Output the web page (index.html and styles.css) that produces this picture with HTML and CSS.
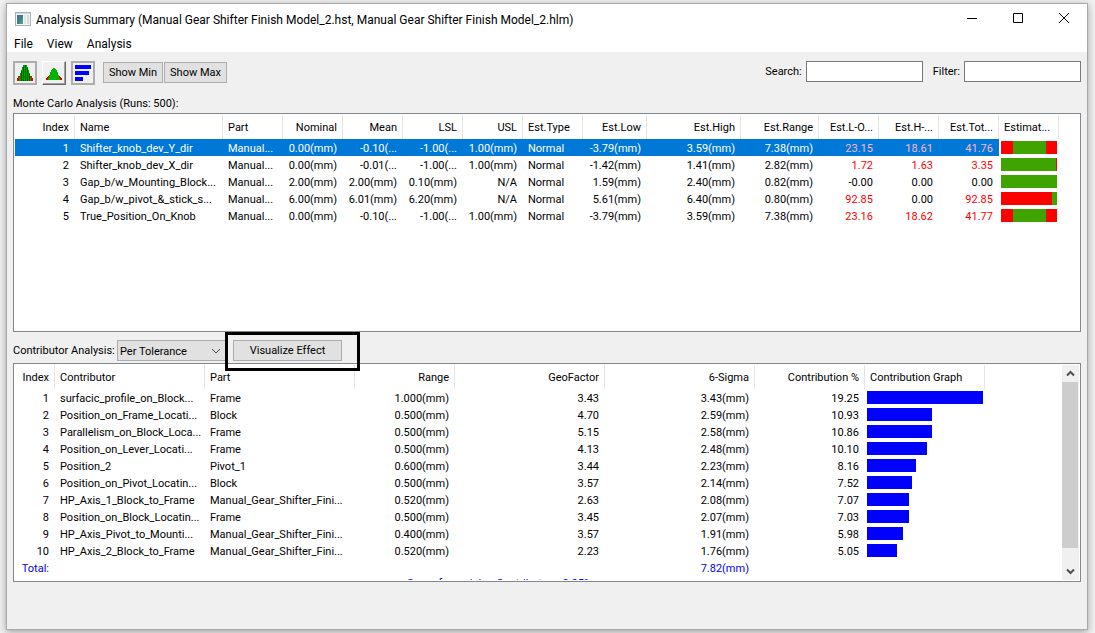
FILE: index.html
```
<!DOCTYPE html>
<html lang="en">
<head>
<meta charset="utf-8">
<title>Analysis Summary</title>
<link rel="stylesheet" href="styles.css">
</head>
<body>
<main class="window">
  <header class="titlebar">
    <svg class="app-icon" width="16" height="14" viewBox="0 0 16 14" aria-hidden="true">
      <rect x=".5" y=".5" width="15" height="13" fill="#f4f4f4" stroke="#a9b0b5"/>
      <rect x="1" y="1" width="14" height="1" fill="#d4dade"/>
      <rect x="2" y="3" width="6" height="9" fill="#3f7f93"/>
      <path d="M2 3h4L2 9z" fill="#4a6ea0"/><path d="M8 6v6H4z" fill="#4f9c80"/>
      <rect x="9" y="3" width="2" height="9" fill="#dfe5e8"/><rect x="12" y="3" width="2" height="9" fill="#d3dadd"/>
    </svg>
    <h1 class="title">Analysis Summary (Manual Gear Shifter Finish Model_2.hst, Manual Gear Shifter Finish Model_2.hlm)</h1>
    <div class="caption-buttons">
      <button class="caption" aria-label="Minimize"><svg width="12" height="12" viewBox="0 0 12 12"><path d="M1 5.500h10" stroke="#000"/></svg></button>
      <button class="caption" aria-label="Maximize"><svg width="12" height="12" viewBox="0 0 12 12"><path d="M1.500 .5h9v9h-9z" fill="none" stroke="#000"/></svg></button>
      <button class="caption" aria-label="Close"><svg width="12" height="12" viewBox="0 0 12 12"><path d="M1 0l10 10M11 0L1 10" stroke="#000"/></svg></button>
    </div>
  </header>
  <nav class="menubar">
    <button class="menu">File</button>
    <button class="menu">View</button>
    <button class="menu">Analysis</button>
  </nav>

  <div class="content">
    <div class="toolbar">
      <div class="tools">
        <button class="tool" aria-label="Histogram">
          <svg width="18" height="18" viewBox="0 0 18 18" shape-rendering="crispEdges">
            <path d="M1 17v-3h1v-2h2v5zM17 17v-3h-1v-2h-2v5z" fill="#e00000"/>
            <path d="M3 17v-4h1v-4h1v-3h1v-3h1v-2h4v2h1v3h1v3h1v4h1v4z" fill="#00a000"/>
            <path d="M5.500 7v10M7.500 3v14M9.500 1v16M11.500 4v13M13.500 10v7" stroke="#006400" fill="none"/>
          </svg>
        </button>
        <button class="tool raised" aria-label="Distribution curve">
          <svg width="18" height="18" viewBox="0 0 18 18" shape-rendering="crispEdges">
            <path d="M1 16v-2h1v-1h1v-1h2v4zM17 16v-2h-1v-1h-1v-1h-2v4z" fill="#e00000"/>
            <path d="M3 16v-2h1v-3h1v-3h1v-2h1v-1h1v-1h2v1h1v1h1v2h1v3h1v3h1v2z" fill="#00b400"/>
          </svg>
        </button>
        <button class="tool" aria-label="Contributors">
          <svg width="18" height="18" viewBox="0 0 18 18" shape-rendering="crispEdges"><path d="M1 1h16v4H1zM1 7h14v4H1zM1 13h8v4H1z" fill="#00f"/></svg>
        </button>
      </div>
      <div class="show">
        <button class="btn show-min">Show Min</button>
        <button class="btn show-max">Show Max</button>
      </div>
      <div class="filters">
        <label for="search">Search:</label><input id="search" class="field" type="text">
        <label for="filter" class="filter-label">Filter:</label><input id="filter" class="field" type="text">
      </div>
    </div>

    <h2 class="caption-text">Monte Carlo Analysis (Runs: 500):</h2>
    <section class="panel">
      <table class="grid">
        <colgroup><col class="w60"><col class="w148"><col class="w60"><col class="w60"><col class="w60"><col class="w60"><col class="w60"><col class="w60"><col class="w64"><col class="w94"><col class="w78"><col class="w60"><col class="w60"><col class="w60"><col class="w60"><col></colgroup>
        <thead><tr><th class="n">Index</th><th>Name</th><th>Part</th><th class="n">Nominal</th><th class="n">Mean</th><th class="n">LSL</th><th class="n">USL</th><th>Est.Type</th><th class="n">Est.Low</th><th class="n">Est.High</th><th class="n">Est.Range</th><th class="n">Est.L-O...</th><th class="n">Est.H-...</th><th class="n">Est.Tot...</th><th>Estimat...</th></tr></thead>
        <tbody>
          <tr class="selected"><td class="n">1</td><td>Shifter_knob_dev_Y_dir</td><td>Manual...</td><td class="n">0.00(mm)</td><td class="n">-0.10(...</td><td class="n">-1.00(...</td><td class="n">1.00(mm)</td><td>Normal</td><td class="n">-3.79(mm)</td><td class="n">3.59(mm)</td><td class="n">7.38(mm)</td><td class="n bad">23.15</td><td class="n bad">18.61</td><td class="n bad">41.76</td><td class="graph"><div class="split"><i class="out" style="width:21%"></i><i class="in"></i><i class="out" style="width:20%"></i></div></td></tr>
          <tr><td class="n">2</td><td>Shifter_knob_dev_X_dir</td><td>Manual...</td><td class="n">0.00(mm)</td><td class="n">-0.01(...</td><td class="n">-1.00(...</td><td class="n">1.00(mm)</td><td>Normal</td><td class="n">-1.42(mm)</td><td class="n">1.41(mm)</td><td class="n">2.82(mm)</td><td class="n bad">1.72</td><td class="n bad">1.63</td><td class="n bad">3.35</td><td class="graph"><div class="split"><i class="in"></i><i class="out" style="width:2%"></i></div></td></tr>
          <tr><td class="n">3</td><td>Gap_b/w_Mounting_Block...</td><td>Manual...</td><td class="n">2.00(mm)</td><td class="n">2.00(mm)</td><td class="n">0.10(mm)</td><td class="n">N/A</td><td>Normal</td><td class="n">1.59(mm)</td><td class="n">2.40(mm)</td><td class="n">0.82(mm)</td><td class="n">-0.00</td><td class="n">0.00</td><td class="n">0.00</td><td class="graph"><div class="split"><i class="in"></i></div></td></tr>
          <tr><td class="n">4</td><td>Gap_b/w_pivot_&amp;_stick_s...</td><td>Manual...</td><td class="n">6.00(mm)</td><td class="n">6.01(mm)</td><td class="n">6.20(mm)</td><td class="n">N/A</td><td>Normal</td><td class="n">5.61(mm)</td><td class="n">6.40(mm)</td><td class="n">0.80(mm)</td><td class="n bad">92.85</td><td class="n">0.00</td><td class="n bad">92.85</td><td class="graph"><div class="split"><i class="out" style="width:91%"></i><i class="in"></i></div></td></tr>
          <tr><td class="n">5</td><td>True_Position_On_Knob</td><td>Manual...</td><td class="n">0.00(mm)</td><td class="n">-0.10(...</td><td class="n">-1.00(...</td><td class="n">1.00(mm)</td><td>Normal</td><td class="n">-3.79(mm)</td><td class="n">3.59(mm)</td><td class="n">7.38(mm)</td><td class="n bad">23.16</td><td class="n bad">18.62</td><td class="n bad">41.77</td><td class="graph"><div class="split"><i class="out" style="width:21%"></i><i class="in"></i><i class="out" style="width:20%"></i></div></td></tr>
        </tbody>
      </table>
    </section>

    <div class="contrib-bar">
      <label for="mode" class="mode-label">Contributor Analysis:</label>
      <div class="combo">
        <select id="mode" class="select"><option>Per Tolerance</option></select>
        <svg class="chevron" width="10" height="6" viewBox="0 0 10 6"><path d="M1 1l4 4 4-4" fill="none" stroke="#444"/></svg>
      </div>
      <div class="highlight-anchor">
        <button class="btn visualize">Visualize Effect</button>
        <div class="highlight"></div>
      </div>
    </div>

    <section class="panel scroll-panel">
      <div class="rows">
      <table class="grid">
        <colgroup><col class="w40"><col class="w150"><col class="w150"><col class="w100"><col class="w150"><col class="w150"><col class="w110"><col class="w120"><col></colgroup>
        <thead><tr><th class="n">Index</th><th>Contributor</th><th>Part</th><th class="n">Range</th><th class="n">GeoFactor</th><th class="n">6-Sigma</th><th class="n">Contribution %</th><th>Contribution Graph</th></tr></thead>
        <tbody>
          <tr><td class="n">1</td><td>surfacic_profile_on_Block...</td><td>Frame</td><td class="n">1.000(mm)</td><td class="n">3.43</td><td class="n">3.43(mm)</td><td class="n">19.25</td><td class="graph"><div class="bar" style="width:116px"></div></td></tr>
          <tr><td class="n">2</td><td>Position_on_Frame_Locati...</td><td>Block</td><td class="n">0.500(mm)</td><td class="n">4.70</td><td class="n">2.59(mm)</td><td class="n">10.93</td><td class="graph"><div class="bar" style="width:65px"></div></td></tr>
          <tr><td class="n">3</td><td>Parallelism_on_Block_Loca...</td><td>Frame</td><td class="n">0.500(mm)</td><td class="n">5.15</td><td class="n">2.58(mm)</td><td class="n">10.86</td><td class="graph"><div class="bar" style="width:65px"></div></td></tr>
          <tr><td class="n">4</td><td>Position_on_Lever_Locati...</td><td>Frame</td><td class="n">0.500(mm)</td><td class="n">4.13</td><td class="n">2.48(mm)</td><td class="n">10.10</td><td class="graph"><div class="bar" style="width:60px"></div></td></tr>
          <tr><td class="n">5</td><td>Position_2</td><td>Pivot_1</td><td class="n">0.600(mm)</td><td class="n">3.44</td><td class="n">2.23(mm)</td><td class="n">8.16</td><td class="graph"><div class="bar" style="width:49px"></div></td></tr>
          <tr><td class="n">6</td><td>Position_on_Pivot_Locatin...</td><td>Block</td><td class="n">0.500(mm)</td><td class="n">3.57</td><td class="n">2.14(mm)</td><td class="n">7.52</td><td class="graph"><div class="bar" style="width:45px"></div></td></tr>
          <tr><td class="n">7</td><td>HP_Axis_1_Block_to_Frame</td><td>Manual_Gear_Shifter_Fini...</td><td class="n">0.520(mm)</td><td class="n">2.63</td><td class="n">2.08(mm)</td><td class="n">7.07</td><td class="graph"><div class="bar" style="width:42px"></div></td></tr>
          <tr><td class="n">8</td><td>Position_on_Block_Locatin...</td><td>Frame</td><td class="n">0.500(mm)</td><td class="n">3.45</td><td class="n">2.07(mm)</td><td class="n">7.03</td><td class="graph"><div class="bar" style="width:42px"></div></td></tr>
          <tr><td class="n">9</td><td>HP_Axis_Pivot_to_Mounti...</td><td>Manual_Gear_Shifter_Fini...</td><td class="n">0.400(mm)</td><td class="n">3.57</td><td class="n">1.91(mm)</td><td class="n">5.98</td><td class="graph"><div class="bar" style="width:36px"></div></td></tr>
          <tr><td class="n">10</td><td>HP_Axis_2_Block_to_Frame</td><td>Manual_Gear_Shifter_Fini...</td><td class="n">0.520(mm)</td><td class="n">2.23</td><td class="n">1.76(mm)</td><td class="n">5.05</td><td class="graph"><div class="bar" style="width:30px"></div></td></tr>
          <tr class="total"><td class="n">Total:</td><td></td><td></td><td></td><td></td><td class="n">7.82(mm)</td><td></td><td></td></tr>
          <tr class="total"><td class="rest" colspan="8">Sum of remaining Contributors: 8.05%</td></tr>
        </tbody>
      </table>
      </div>
      <div class="scrollbar">
        <button class="arrow" aria-label="Scroll up"><svg width="9" height="7" viewBox="0 0 9 7"><path d="M1 5.500L4.500 2L8 5.500" fill="none" stroke="#505050" stroke-width="2"/></svg></button>
        <div class="thumb"></div>
        <button class="arrow" aria-label="Scroll down"><svg width="9" height="7" viewBox="0 0 9 7"><path d="M1 1.500L4.500 5L8 1.500" fill="none" stroke="#505050" stroke-width="2"/></svg></button>
      </div>
    </section>
  </div>
</main>
</body>
</html>
```
FILE: styles.css
```
* { box-sizing: border-box; }
body {
  margin: 0;
  height: 100vh;
  padding: 3px 7px 3px 6px;
  display: flex;
  background: #f2f2f2;
  font: 11px/17px Roboto, "Open Sans", sans-serif;
  color: #000;
  overflow: hidden;
}
button, input, select { font: inherit; color: inherit; margin: 0; }
.window {
  flex: 1;
  min-width: 0;
  display: flex;
  flex-direction: column;
  background: #f0f0f0;
  border: 1px solid #a8a8a8;
  box-shadow: 0 2px 8px rgba(0, 0, 0, .35);
}
.titlebar { display: flex; align-items: center; height: 30px; padding-left: 8px; background: #fff; }
.title { margin: 0 0 0 5px; padding-top: 2px; font-size: 12px; font-weight: 400; white-space: nowrap; }
.caption-buttons { display: flex; margin-left: auto; }
.caption { width: 46px; height: 30px; padding: 0; border: 0; background: none; display: grid; place-items: center; }
.menubar { display: flex; gap: 14px; height: 18px; padding: 0 7px; background: #fff; font-size: 12px; }
.menu { padding: 2px 0 0; border: 0; background: none; line-height: 16px; }
.content { flex: 1; min-height: 0; display: flex; flex-direction: column; padding: 9px 6px 47px; }
.toolbar { display: flex; align-items: flex-start; height: 24px; }
.tools { display: flex; gap: 5px; }
.tool { width: 24px; height: 24px; padding: 1px; border: 2px solid #adadad; background: #f0f0f0; display: grid; place-items: center; }
.raised { border: 1px solid; border-color: #fff #696969 #696969 #fff; box-shadow: inset -1px -1px #a0a0a0; }
.show { display: flex; gap: 1px; padding: 1px 0 0 8px; }
.btn { height: 21px; padding: 1px 0 0; border: 1px solid #adadad; background: #e1e1e1; line-height: 18px; white-space: nowrap; }
.show-min { width: 60px; }
.show-max { width: 63px; }
.filters { display: flex; align-items: center; margin-left: auto; }
.filter-label { margin-left: 10px; }
.field { width: 117px; height: 21px; margin-left: 4px; padding: 0 4px; border: 1px solid #7a7a7a; background: #fff; }
.caption-text { margin: 10px 0 1px; font-size: 11px; font-weight: 400; }
.panel { flex: 1; min-height: 0; padding: 1px; border: 1px solid #828790; background: #fff; overflow: hidden; }
.scroll-panel { display: flex; }
.rows { flex: 1; min-width: 0; overflow: hidden; }
.grid { width: 100%; table-layout: fixed; border-collapse: separate; border-spacing: 0; }
.grid th, .grid td { padding: 0 6px 0 5px; text-align: left; font-weight: 400; white-space: nowrap; }
.grid th { height: 24px; border-right: 1px solid #e5e5e5; padding-right: 5px; }
.grid td { height: 17px; padding-top: 2px; line-height: 15px; }
.grid .n { text-align: right; }
.grid .rest { padding-top: 0; text-align: center; vertical-align: top; line-height: 15px; }
.grid .graph { padding: 2px; }
.w40 { width: 40px; } .w60 { width: 60px; } .w64 { width: 64px; } .w78 { width: 78px; }
.w94 { width: 94px; } .w100 { width: 100px; } .w110 { width: 110px; } .w120 { width: 120px; }
.w148 { width: 148px; } .w150 { width: 150px; }
.bad { color: #f00; }
.selected td:not(.graph) { background: #0078d7; color: #fff; }
.selected td.bad { color: #ffb4c8; }
.total { color: #00f; }
.split { display: flex; height: 13px; }
.out { background: #f00; }
.in { flex: 1; background: #40a400; }
.bar { height: 13px; background: #00f; }
.contrib-bar { display: flex; align-items: center; height: 31px; padding-top: 6px; }
.mode-label { width: 104px; white-space: nowrap; }
.combo { display: grid; align-items: center; }
.combo > * { grid-area: 1 / 1; }
.select { appearance: none; width: 110px; height: 21px; padding: 1px 2px 0; border: 1px solid #adadad; border-radius: 0; background: #e1e1e1; }
.chevron { justify-self: end; margin-right: 6px; pointer-events: none; }
.highlight-anchor { position: relative; margin-left: 6px; }
.visualize { display: block; width: 109px; }
.highlight { position: absolute; inset: -8px -18px -10px -8px; border: 3px solid #000; pointer-events: none; }
.scrollbar { width: 17px; display: flex; flex-direction: column; padding-right: 1px; background: #f0f0f0; }
.arrow { height: 17px; padding: 0; border: 0; background: none; display: grid; place-items: center; }
.thumb { height: 166px; background: #cdcdcd; }
.arrow:last-child { margin-top: auto; }
```
